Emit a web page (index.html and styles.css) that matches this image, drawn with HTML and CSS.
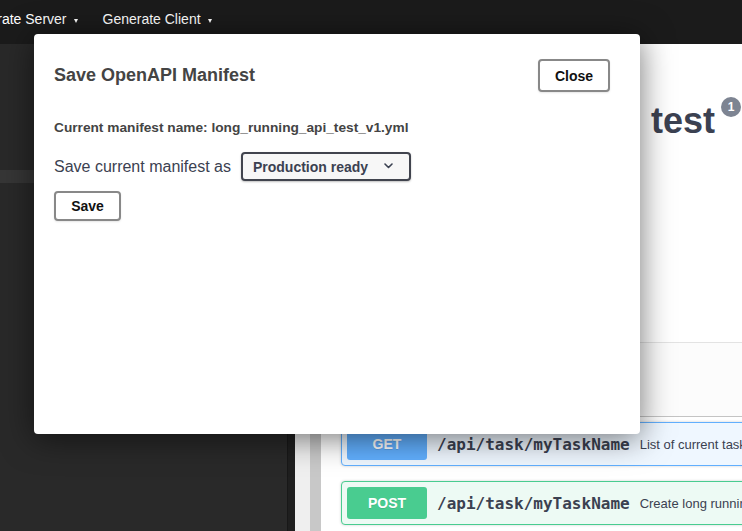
FILE: index.html
```html
<!DOCTYPE html>
<html lang="en">
<head>
<meta charset="utf-8">
<title>Swagger Editor</title>
<link rel="stylesheet" href="styles.css">
</head>
<body>
<div class="app">
  <header class="topbar">
    <nav class="menu">
      <span class="menu-item">Generate Server<i class="caret"></i></span>
      <span class="menu-item">Generate Client<i class="caret"></i></span>
    </nav>
  </header>
  <div class="main">
    <div class="editor">
      <div class="active-line"></div>
    </div>
    <div class="divider"></div>
    <div class="gutter-a"></div>
    <div class="gutter-b"></div>
    <div class="panel">
      <section class="info">
        <h2 class="title">test<span class="version">1</span></h2>
      </section>
      <section class="schemes"></section>
      <section class="ops">
        <div class="opblock opblock-get">
          <span class="method method-get">GET</span>
          <span class="path">/api/task/myTaskName</span>
          <span class="desc">List of current tasks</span>
        </div>
        <div class="opblock opblock-post">
          <span class="method method-post">POST</span>
          <span class="path">/api/task/myTaskName</span>
          <span class="desc">Create long running task</span>
        </div>
      </section>
    </div>
  </div>

  <div class="modal">
    <div class="modal-header">
      <h3 class="modal-title">Save OpenAPI Manifest</h3>
      <button class="btn btn-close">Close</button>
    </div>
    <p class="current-name">Current manifest name: long_running_api_test_v1.yml</p>
    <div class="save-row">
      <label class="save-label" for="kind">Save current manifest as</label>
      <div class="select-wrap">
        <select id="kind" class="select">
          <option>Production ready</option>
          <option>Draft</option>
        </select>
        <svg class="chevron" width="9" height="6" viewBox="0 0 9 6" aria-hidden="true"><path d="M1 1 L4.5 4.5 L8 1" fill="none" stroke="#3b4151" stroke-width="1.6" stroke-linecap="round" stroke-linejoin="round"/></svg>
      </div>
    </div>
    <button class="btn btn-save">Save</button>
  </div>
</div>
</body>
</html>
```

FILE: styles.css
```css
* { box-sizing: border-box; }
html, body { margin: 0; height: 100%; }
body {
  font-family: "Liberation Sans", Arial, sans-serif;
  background: #292929;
  overflow: hidden;
}
.app {
  position: relative;
  height: 531px;
  display: flex;
  flex-direction: column;
  overflow: hidden;
}

/* top bar */
.topbar {
  flex: none;
  height: 44px;
  background: #1b1b1b;
  display: flex;
  overflow: hidden;
}
.menu {
  display: flex;
  align-items: flex-start;
  gap: 25px;
  margin-left: -37px;
  padding-top: 9px;
}
.menu-item {
  color: #fff;
  font-size: 14px;
  line-height: 20px;
  height: 20px;
  white-space: nowrap;
  display: flex;
  align-items: center;
}
.caret {
  width: 0;
  height: 0;
  border-left: 2.5px solid transparent;
  border-right: 2.5px solid transparent;
  border-top: 4px solid #fff;
  margin-left: 7px;
  margin-top: 3px;
}

/* main area */
.main {
  flex: 1;
  display: flex;
  min-height: 0;
}
.editor {
  flex: none;
  width: 287px;
  background: #292929;
  padding-top: 126px;
}
.active-line {
  height: 13px;
  background: #363636;
}
.divider {
  flex: none;
  width: 8px;
  background: #1f1f1f;
  border-left: 1px solid #181818;
}
.gutter-a { flex: none; width: 15px; background: #efefef; }
.gutter-b { flex: none; width: 11px; background: #c8c8c8; }
.panel {
  flex: 1;
  min-width: 0;
  background: #fff;
  padding-left: 20px;
  overflow: hidden;
}
.info {
  height: 298px;
  padding: 58.5px 0 0 310px;
}
.title {
  margin: 0;
  display: flex;
  align-items: flex-start;
  font-size: 36px;
  line-height: 36px;
  font-weight: 700;
  color: #3b4151;
  white-space: nowrap;
}
.version {
  flex: none;
  width: 20px;
  height: 20px;
  margin: -5.5px 0 0 6px;
  border-radius: 50%;
  background: #7d8492;
  color: #fff;
  font-size: 12px;
  line-height: 1;
  font-weight: 700;
  display: flex;
  align-items: center;
  justify-content: center;
}
.schemes {
  height: 75px;
  margin-left: -20px;
  background: #fcfcfc;
  border-top: 1px solid #e3e3e3;
  border-bottom: 1px solid #c4c4c4;
}
.ops { padding-top: 5px; }
.opblock {
  width: 700px;
  display: flex;
  align-items: center;
  padding: 5px;
  margin-bottom: 15px;
  border: 1px solid;
  border-radius: 4px;
  box-shadow: 0 0 3px rgba(0, 0, 0, .19);
  white-space: nowrap;
}
.opblock-get { background: #eff7ff; border-color: #61affe; }
.opblock-post { background: #edfaf4; border-color: #49cc90; }
.method {
  flex: none;
  width: 80px;
  height: 32px;
  border-radius: 3px;
  color: #fff;
  font-size: 14px;
  font-weight: 700;
  text-shadow: 0 1px 0 rgba(0, 0, 0, .1);
  display: flex;
  align-items: center;
  justify-content: center;
}
.method-get { background: #61affe; }
.method-post { background: #49cc90; }
.path {
  padding: 0 10px;
  font-family: "DejaVu Sans Mono", monospace;
  font-size: 16px;
  font-weight: 600;
  color: #3b4151;
}
.desc {
  font-size: 13px;
  color: #3b4151;
}

/* modal */
.modal {
  position: absolute;
  left: 34px;
  top: 34px;
  width: 606px;
  height: 400px;
  background: #fff;
  border-radius: 4px;
  box-shadow: 0 4px 32px rgba(0, 0, 0, .55);
  padding: 25px 30px 20px 20px;
}
.modal-header {
  height: 33px;
  display: flex;
  align-items: center;
  justify-content: space-between;
}
.modal-title {
  margin: 0;
  font-size: 18px;
  font-weight: 700;
  color: #444;
}
.btn {
  font-family: "Liberation Sans", Arial, sans-serif;
  font-size: 14px;
  font-weight: 700;
  color: #111;
  background: #fff;
  border: 2px solid #888;
  border-radius: 4px;
  padding: 0;
  box-shadow: 0 1px 2px rgba(0, 0, 0, .1);
}
.btn-close { width: 72px; height: 33px; }
.btn-save { width: 67px; height: 30px; margin-top: 10px; display: block; }
.current-name {
  margin: 28px 0 0;
  font-size: 13.7px;
  line-height: 15px;
  font-weight: 700;
  color: #444;
}
.save-row {
  margin-top: 17px;
  display: flex;
  align-items: center;
  gap: 10px;
}
.save-label {
  font-size: 16px;
  color: #3b4151;
}
.select-wrap { position: relative; }
.select {
  display: block;
  width: 170px;
  height: 29px;
  -webkit-appearance: none;
  appearance: none;
  border: 2px solid #41444e;
  border-radius: 4px;
  background: #f7f7f7;
  box-shadow: 0 1px 2px rgba(0, 0, 0, .25);
  padding: 0 40px 0 10px;
  font-family: "Liberation Sans", Arial, sans-serif;
  font-size: 14px;
  font-weight: 700;
  color: #3b4151;
}
.chevron {
  position: absolute;
  right: 18px;
  top: 11px;
}
```
